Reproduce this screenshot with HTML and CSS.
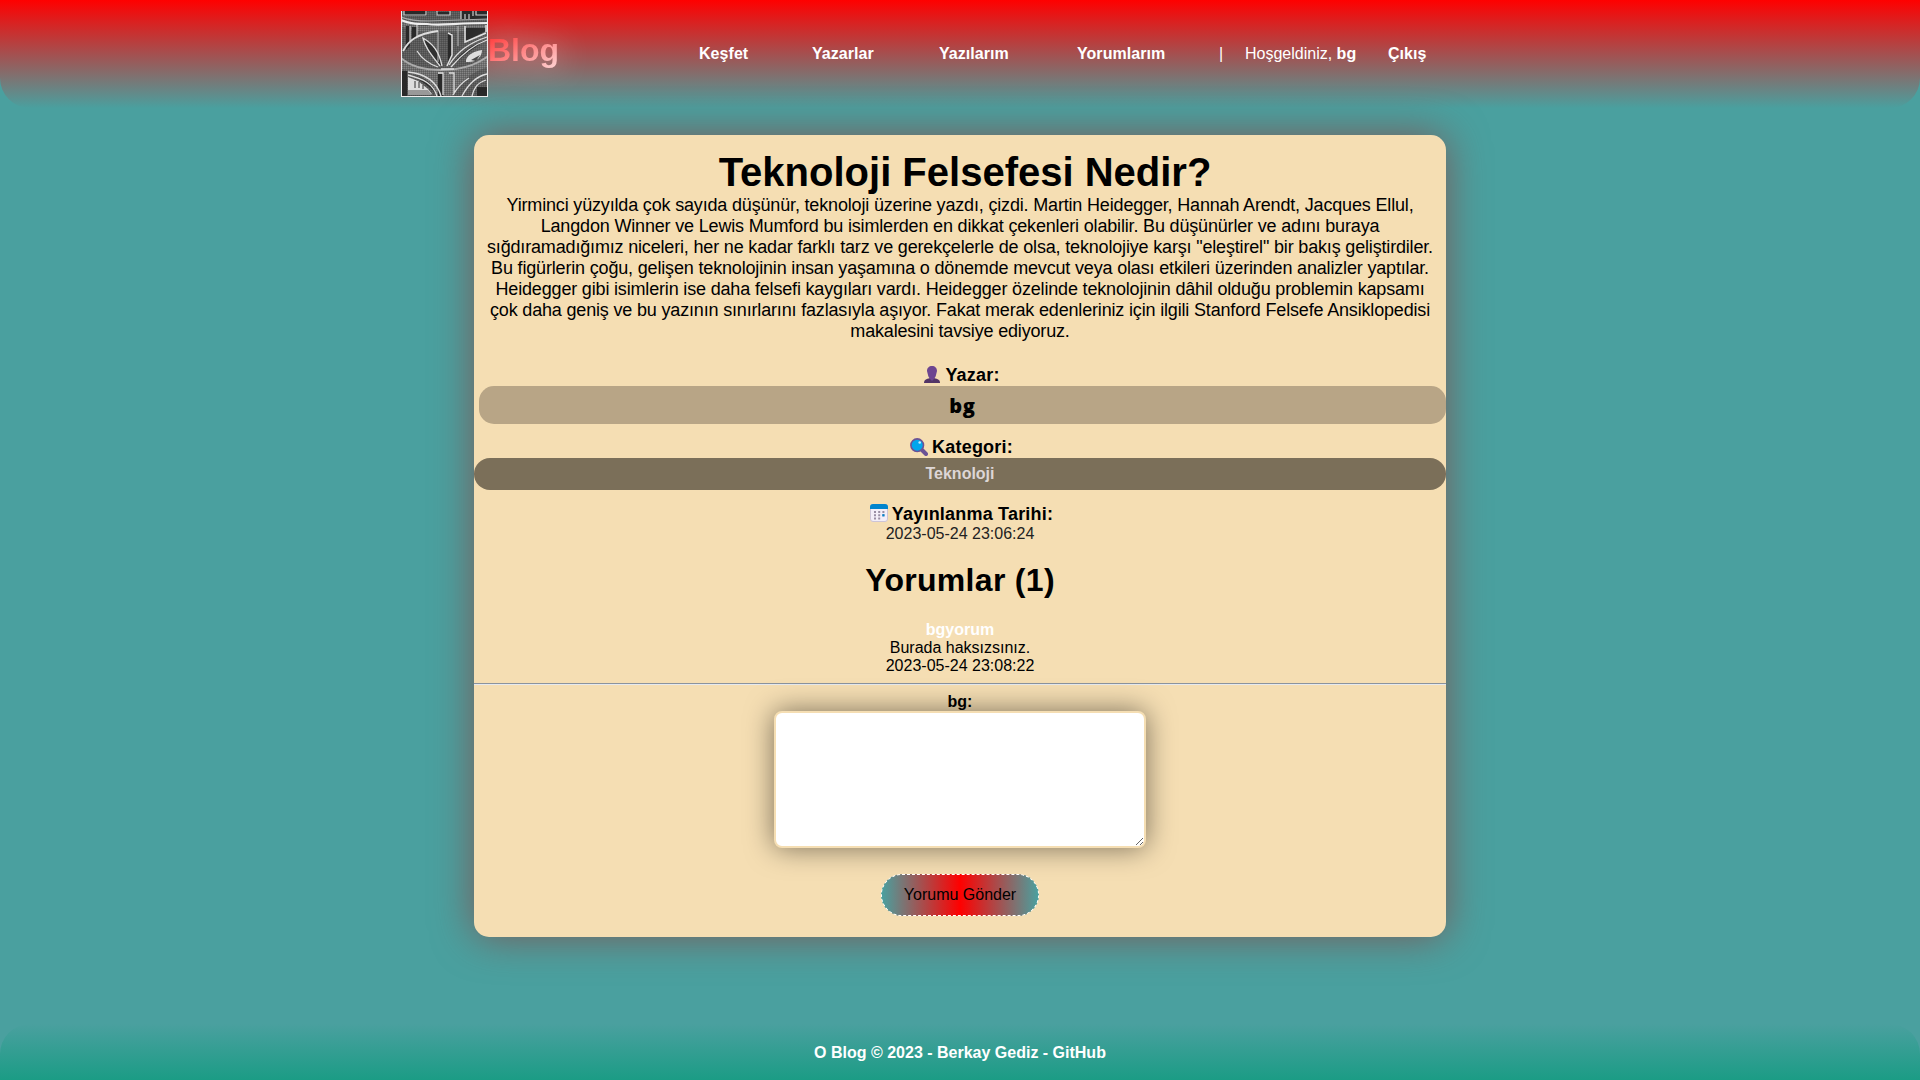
FILE: index.html
```html
<!DOCTYPE html>
<html lang="tr">
<head>
<meta charset="utf-8">
<title>O Blog</title>
<link rel="stylesheet" href="styles.css">
</head>
<body>
<header class="header">
  <a class="brand">
    <svg class="logo" viewBox="0 0 87 86" fill="none">
      <defs>
        <pattern id="hatch" width="2" height="2" patternUnits="userSpaceOnUse"><path d="M0 .5H2M.5 0V2" stroke="#333" stroke-width=".5" opacity=".6"/></pattern>
      </defs>
      <path fill="#686868" d="M0 0h87v86H0z"/>
      <path fill="#858585" d="M0 9c8 4 14 6 28 6l59-1v6l-60 1C14 21 5 18 0 15zM0 46c12 10 24 14 42 14s34-5 45-14v10c-14 4-28 13-35 29H37C30 70 20 62 0 58z"/>
      <path fill="url(#hatch)" d="M0 0h87v86H0z"/>
      <path fill="#292929" d="M3 0h23v5H3zM35 1h14v3H35zM60 0h26v8H60zM5 15h4v20l-4 4zM11 16h5v9l-5 5zM47 22h4v24l-4 8zM65 17h20v3L65 30zM0 60h6v26H0zM37 63h5v22h-5zM76 76h11v10H76z"/>
      <path fill="#303030" d="M22 28c9 3 15 12 19 28-8-8-14-17-19-28zM50 56c9-14 20-22 35-27-13 9-24 16-35 27zM9 64c14 2 23 8 27 20-8-9-16-15-27-20z"/>
      <path stroke="#ccc" stroke-width="1.2" d="M3 0v4h22V0M36 0v4h13V0M60 0v8M64 3v5M68 3v5M72 0v5M75 0v4h11M16 13v13M9 15v15"/>
      <path stroke="#eee" stroke-width="2.2" d="M0 9c8 3 12 4 26 4 14 2 28-1 61-1"/>
      <path stroke="#aaa" stroke-width="1.2" d="M0 6c8 3 14 4 28 4l59-2M37 20v31M57 15v20"/>
      <path stroke="#e0e0e0" stroke-width="1.5" d="M64 15v16l21-9M85 14v7M47 22l4 2v20l-5 11"/>
      <path stroke="#ddd" stroke-width="1.8" d="M2 40c6-11 14-17 35-20"/>
      <path stroke="#aaa" stroke-width="1.8" d="M0 47c10 9 24 12 40 12 18 0 33-3 47-14"/>
      <path stroke="#ddd" stroke-width="1.3" d="M40 58h13M50 56c12-14 22-22 36-27M48 54c9-14 20-22 38-28M41 55c-3-15-9-22-19-28 2 9 7 15 17 28M37 56c-9-3-16-8-21-16M7 61c19 2 29 10 33 24M7 64c16 4 25 9 29 21M86 63c-10 2-18 9-25 22M85 69c-9 3-12 8-14 16M68 67c-8 5-12 10-16 17M37 62h5v22M48 62h5v20"/>
      <path fill="#ddd" d="M65 49c2-6 9-9 16-10 0 7-6 13-16 12zM7 66l10 4 10 8 4 5H7z"/>
      <path fill="#444" d="M70 49l9-5-4 6z"/>
      <path stroke="#333" d="M14 70v7M18 71v6M22 74v4"/>
      <path fill="#999" d="M7 79h20l4 5H7z"/>
      <path stroke="#eee" stroke-width="1" d="M.5 0v86M86.5 0v86M0 85.5h87"/>
    </svg>
    <span class="brand-name">Blog</span>
  </a>
  <nav class="nav">
    <a class="link explore">Keşfet</a>
    <a class="link authors">Yazarlar</a>
    <a class="link posts">Yazılarım</a>
    <a class="link comments">Yorumlarım</a>
    <span class="divider">|</span>
    <span class="welcome">Hoşgeldiniz, <b>bg</b></span>
    <a class="link">Çıkış</a>
  </nav>
</header>
<main class="card">
  <h1 class="title">Teknoloji Felsefesi Nedir?</h1>
  <p class="content">Yirminci yüzyılda çok sayıda düşünür, teknoloji üzerine yazdı, çizdi. Martin Heidegger, Hannah Arendt, Jacques Ellul,<br>Langdon Winner ve Lewis Mumford bu isimlerden en dikkat çekenleri olabilir. Bu düşünürler ve adını buraya<br>sığdıramadığımız niceleri, her ne kadar farklı tarz ve gerekçelerle de olsa, teknolojiye karşı "eleştirel" bir bakış geliştirdiler.<br>Bu figürlerin çoğu, gelişen teknolojinin insan yaşamına o dönemde mevcut veya olası etkileri üzerinden analizler yaptılar.<br>Heidegger gibi isimlerin ise daha felsefi kaygıları vardı. Heidegger özelinde teknolojinin dâhil olduğu problemin kapsamı<br>çok daha geniş ve bu yazının sınırlarını fazlasıyla aşıyor. Fakat merak edenleriniz için ilgili Stanford Felsefe Ansiklopedisi<br>makalesini tavsiye ediyoruz.</p>
  <h2 class="label label-author">
    <svg class="icon" viewBox="0 0 18 18"><path fill="#533566" d="M1 17c0-3 2-4 6-5h4c4 1 6 2 6 5z"/><path fill="#6d4590" d="M9 0c3 0 5 2 5 5l-1 4c0 2-2 3-2 4l-2 2-2-2c0-1-2-2-2-4L4 5c0-3 2-5 5-5z"/></svg>
    <span>Yazar:</span>
  </h2>
  <div class="author">bg</div>
  <h2 class="label label-category">
    <svg class="icon" viewBox="0 0 18 18"><path d="M12 12l4 4" stroke="#6b5295" stroke-width="4" stroke-linecap="round"/><circle cx="7.2" cy="7.2" r="6.3" fill="#00a6ed" stroke="#6b5295" stroke-width="1.6"/><circle cx="9.7" cy="4.5" r="1.3" fill="#c8eaff"/></svg>
    <span>Kategori:</span>
  </h2>
  <div class="category">Teknoloji</div>
  <h2 class="label label-date">
    <svg class="icon" viewBox="0 0 18 18"><rect x=".5" y=".5" width="17" height="17" rx="2.5" fill="#f3eef8" stroke="#cdc4d6"/><path fill="#0084ce" d="M0 5V3a3 3 0 013-3h12a3 3 0 013 3v2z"/><path d="M4 8h10.4M4 11.3h10.4M4 14.6h7" stroke="#998ea4" stroke-width="2" stroke-dasharray="2 2.2"/><path fill="#0084ce" d="M12.3 10.2h2.2v2.2h-2.2z"/></svg>
    <span>Yayınlanma Tarihi:</span>
  </h2>
  <time class="date">2023-05-24 23:06:24</time>
  <h2 class="comments-title">Yorumlar (1)</h2>
  <div class="comment"><b class="comment-user">bgyorum</b><br>Burada haksızsınız.<br>2023-05-24 23:08:22</div>
  <hr class="rule">
  <form class="form">
    <label class="form-label" for="comment">bg:</label>
    <textarea class="input" id="comment"></textarea>
    <button class="submit" type="button">Yorumu Gönder</button>
  </form>
</main>
<footer class="footer">O Blog © 2023 - Berkay Gediz - GitHub</footer>
</body>
</html>
```
FILE: styles.css
```css
* { box-sizing: border-box; margin: 0; padding: 0; }
body {
  display: flex;
  flex-direction: column;
  height: 1080px;
  overflow: hidden;
  background: #4aa09f;
  font-family: "Liberation Sans", Arial, sans-serif;
  font-size: 16px;
  line-height: 18px;
  color: #000;
}
.header {
  display: flex;
  flex: none;
  height: 108px;
  padding: 11px 0 0 401px;
  border-radius: 0 0 30px 30px;
  background: linear-gradient(red, #4aa09f);
}
.brand { display: flex; width: 298px; }
.logo { flex: none; width: 87px; height: 86px; }
.brand-name {
  height: 36px;
  margin-top: 21px;
  font-size: 32px;
  line-height: 36px;
  font-weight: bold;
  background: linear-gradient(to bottom right, #ff3030, #ffd5d5);
  background-clip: text;
  color: transparent;
  filter: drop-shadow(0 0 16px rgba(255, 255, 255, .5));
}
.nav {
  display: flex;
  height: 18px;
  margin-top: 34px;
  color: #fff;
  white-space: nowrap;
}
.link { font-weight: bold; letter-spacing: .05px; }
.explore { width: 113px; }
.authors { width: 127px; }
.posts { width: 138px; }
.comments { width: 142px; }
.divider { width: 26px; }
.welcome { width: 143px; }
.card {
  flex: none;
  width: 972px;
  height: 802px;
  margin: 27px auto 0;
  padding-top: 15px;
  border-radius: 15px;
  background: #f5deb3;
  box-shadow: 0 0 40px #7c5858;
  text-align: center;
}
.title { padding-left: 10px; font-size: 40px; line-height: 45px; }
.content {
  font-size: 18px;
  line-height: 21px;
  letter-spacing: -.17px;
  white-space: nowrap;
}
.label {
  display: flex;
  justify-content: center;
  gap: 4px;
  height: 21px;
  font-size: 18px;
  line-height: 21px;
  letter-spacing: .2px;
}
.icon { width: 18px; height: 18px; margin-top: 1px; }
.label-author { margin-top: 23px; padding-left: 3px; }
.author {
  height: 38px;
  margin-left: 5px;
  padding-top: 1px;
  border-radius: 15px;
  background: #b8a586;
  font: 800 20px/38px "Open Sans", sans-serif;
  letter-spacing: .8px;
}
.label-category { margin-top: 13px; padding-left: 3px; }
.category {
  height: 32px;
  border-radius: 16px;
  background: #7b6f59;
  color: #ddd6d6;
  font-weight: bold;
  line-height: 32px;
}
.label-date { margin-top: 14px; padding-left: 3px; }
.label-date .icon { margin-top: 0; }
.date { display: block; color: #222; }
.comments-title {
  margin-top: 19px;
  font-size: 32px;
  line-height: 37px;
  letter-spacing: .3px;
}
.comment { margin-top: 22px; }
.comment-user { color: #fff; }
.rule {
  height: 2px;
  margin: 8px 0;
  border: 0;
  border-top: 1px solid #8b939d;
  border-bottom: 1px solid #e6e9ee;
}
.form { display: flex; flex-direction: column; align-items: center; }
.form-label { z-index: 1; font-weight: bold; }
.input {
  width: 372px;
  height: 137px;
  border: 2px solid #f5deb3;
  border-radius: 8px;
  box-shadow: 0 0 28px rgba(0, 0, 0, .5);
  resize: both;
}
.submit {
  width: 158px;
  height: 42px;
  margin-top: 26px;
  border: 1px dashed #fff;
  border-radius: 21px;
  background: linear-gradient(to right, #4aa09f, red, #4aa09f);
  font: 16px "Liberation Sans", Arial, sans-serif;
}
.footer {
  height: 56px;
  margin-top: auto;
  padding-top: 20px;
  border-radius: 30px 30px 0 0;
  background: linear-gradient(#4aa09f, #1b9c85);
  color: #fff;
  font-weight: bold;
  text-align: center;
}
```
